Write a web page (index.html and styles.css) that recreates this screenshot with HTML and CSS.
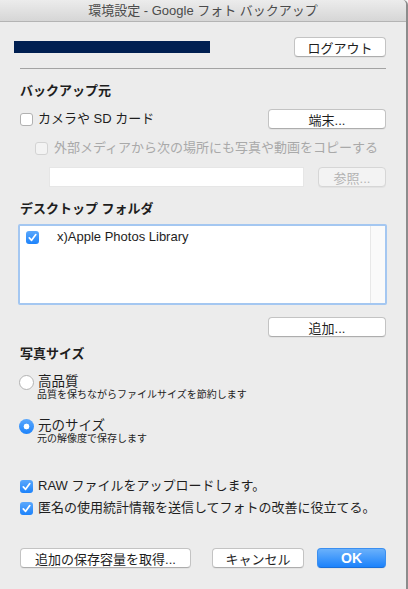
FILE: index.html
```html
<!DOCTYPE html>
<html lang="ja">
<head>
    <meta charset="UTF-8">
    <title>環境設定 - Google フォト バックアップ</title>
    <link rel="stylesheet" href="styles.css">
</head>
<body>
    <div class="window">
        <div class="titlebar">環境設定 - Google フォト バックアップ</div>

        <div class="content">
            <div class="account-row">
                <div class="account-bar"></div>
                <button class="btn btn-logout">ログアウト</button>
            </div>
            <div class="separator"></div>

            <div class="heading heading-source">バックアップ元</div>
            <div class="row row-camera">
                <label class="check-item">
                    <span class="check"></span>
                    <span>カメラや SD カード</span>
                </label>
                <button class="btn btn-wide">端末...</button>
            </div>
            <div class="row row-external">
                <label class="check-item disabled">
                    <span class="check"></span>
                    <span>外部メディアから次の場所にも写真や動画をコピーする</span>
                </label>
            </div>
            <div class="row row-path">
                <div class="path-input"></div>
                <button class="btn btn-browse" disabled>参照...</button>
            </div>

            <div class="heading heading-folder">デスクトップ フォルダ</div>
            <div class="folder-list">
                <div class="folder-rows">
                    <div class="folder-row">
                        <span class="check checked">
                            <svg width="13" height="13" viewBox="0 0 13 13"><path d="M3.3 6.9 L5.6 9.3 L9.8 3.6" fill="none" stroke="#fff" stroke-width="1.7" stroke-linecap="round" stroke-linejoin="round"/></svg>
                        </span>
                        <span class="folder-name">x)Apple Photos Library</span>
                    </div>
                </div>
                <div class="folder-scroll"></div>
            </div>
            <div class="row row-add">
                <button class="btn btn-wide">追加...</button>
            </div>

            <div class="heading heading-size">写真サイズ</div>
            <div class="radio-option option-high">
                <span class="radio"></span>
                <div class="radio-text">
                    <div class="radio-label">高品質</div>
                    <div class="radio-sub">品質を保ちながらファイルサイズを節約します</div>
                </div>
            </div>
            <div class="radio-option option-original">
                <span class="radio selected"></span>
                <div class="radio-text">
                    <div class="radio-label">元のサイズ</div>
                    <div class="radio-sub">元の解像度で保存します</div>
                </div>
            </div>

            <label class="check-item row-raw">
                <span class="check checked">
                    <svg width="13" height="13" viewBox="0 0 13 13"><path d="M3.3 6.9 L5.6 9.3 L9.8 3.6" fill="none" stroke="#fff" stroke-width="1.7" stroke-linecap="round" stroke-linejoin="round"/></svg>
                </span>
                <span>RAW ファイルをアップロードします。</span>
            </label>
            <label class="check-item row-stats">
                <span class="check checked">
                    <svg width="13" height="13" viewBox="0 0 13 13"><path d="M3.3 6.9 L5.6 9.3 L9.8 3.6" fill="none" stroke="#fff" stroke-width="1.7" stroke-linecap="round" stroke-linejoin="round"/></svg>
                </span>
                <span>匿名の使用統計情報を送信してフォトの改善に役立てる。</span>
            </label>

            <div class="footer">
                <button class="btn btn-storage">追加の保存容量を取得...</button>
                <div class="footer-right">
                    <button class="btn btn-cancel">キャンセル</button>
                    <button class="btn btn-ok">OK</button>
                </div>
            </div>
        </div>
    </div>
</body>
</html>
```

FILE: styles.css
```css
*, *::before, *::after {
    box-sizing: border-box;
}

html, body {
    width: 100%;
    height: 100%;
    margin: 0;
}
body {
    background: #f6f6f6;
    font-family: "Liberation Sans", "Noto Sans CJK JP", sans-serif;
    font-size: 13px;
    color: #1e1e1e;
    overflow: hidden;
}
.window {
    width: 408px;
    height: 589px;
    background: #ececec;
    border-right: 2px solid #8c8c8c;
    border-top-right-radius: 5px;
    display: flex;
    flex-direction: column;
}
.titlebar {
    flex: 0 0 22px;
    line-height: 21px;
    text-align: center;
    color: #4b4b4b;
    background: linear-gradient(#ececec, #d6d6d6);
    border-bottom: 1px solid #b4b4b4;
    border-top-right-radius: 5px;
}
.content {
    display: flex;
    flex-direction: column;
    padding: 0 20px;
}

/* buttons */
.btn {
    height: 20px;
    padding: 0;
    font-family: inherit;
    font-size: 13px;
    color: #1e1e1e;
    background: #fff;
    border: 1px solid #c3c3c3;
    border-bottom-color: #adadad;
    border-radius: 4px;
    box-shadow: 0 1px 0 rgba(0, 0, 0, 0.04);
}
.btn:disabled {
    background: #f3f3f3;
    color: #b3b3b3;
    border-color: #d6d6d6;
}
.btn-logout {
    width: 92px;
}
.btn-wide {
    width: 118px;
}
.btn-browse {
    width: 68px;
}
.btn-storage {
    width: 171px;
}
.btn-cancel {
    width: 92px;
}
.btn-ok {
    width: 69px;
    color: #fff;
    font-weight: bold;
    font-size: 14px;
    background: linear-gradient(#6ab1fb, #1c82fb);
    border-color: #3b8ff0;
    border-bottom-color: #1a6fd8;
}

.account-row {
    display: flex;
    align-items: center;
    justify-content: space-between;
    margin-top: 15px;
}
.account-bar {
    width: 196px;
    height: 12px;
    margin-left: -6px;
    background: #001f51;
}
.separator {
    height: 1px;
    margin-top: 11px;
    background: #a3a3a3;
}

.heading {
    font-weight: bold;
    line-height: 16px;
}
.heading-source {
    margin-top: 14px;
}
.heading-folder {
    margin-top: 14px;
}
.heading-size {
    margin-top: 9px;
}

.row {
    display: flex;
    align-items: center;
    justify-content: space-between;
}
.row-camera {
    margin-top: 10px;
}
.row-external {
    margin-top: 11px;
    padding-left: 15px;
}
.row-path {
    margin-top: 11px;
    padding-left: 29px;
}
.row-add {
    justify-content: flex-end;
    margin-top: 12px;
}

/* checkboxes */
.check-item {
    display: flex;
    align-items: center;
    gap: 5px;
    line-height: 16px;
}
.check {
    flex: 0 0 13px;
    width: 13px;
    height: 13px;
    background: #fff;
    border: 1px solid #b1b1b1;
    border-radius: 3px;
    display: flex;
}
.check.checked {
    border: none;
    background: linear-gradient(#5ba8fc, #1d83fb);
}
.check-item.disabled {
    color: #a9a9a9;
    gap: 6px;
}
.check-item.disabled .check {
    background: #f3f3f3;
    border-color: #d3d3d3;
}

.path-input {
    width: 255px;
    height: 20px;
    background: #fff;
    border: 1px solid #e6e6e6;
}

/* folder list */
.folder-list {
    display: flex;
    height: 81px;
    margin: 7px -1px 0 -2px;
    background: #fff;
    border: 2px solid #a4c7f1;
    border-radius: 2px;
}
.folder-rows {
    flex: 1;
    padding: 3px 6px;
}
.folder-row {
    display: flex;
    align-items: center;
    gap: 18px;
    line-height: 16px;
}
.folder-name {
    font-size: 13px;
}
.folder-scroll {
    flex: 0 0 15px;
    background: #fafafa;
    border-left: 1px solid #e8e8e8;
}

/* radios */
.radio-option {
    display: flex;
    align-items: flex-start;
    gap: 4px;
    margin-left: -1px;
}
.option-high {
    margin-top: 12px;
}
.option-original {
    margin-top: 17px;
}
.radio {
    flex: 0 0 15px;
    width: 15px;
    height: 15px;
    margin-top: 1px;
    background: #fff;
    border: 1px solid #b3b3b3;
    border-radius: 50%;
}
.radio.selected {
    border: none;
    background: radial-gradient(circle, #fff 0 2.6px, transparent 3.2px), linear-gradient(#5ba8fc, #1d83fb);
}
.radio-label {
    font-size: 13.5px;
    line-height: 15px;
}
.radio-sub {
    font-size: 10px;
    line-height: 12px;
    margin-left: -1px;
}

.row-raw {
    margin-top: 33px;
}
.row-stats {
    margin-top: 6px;
}

.footer {
    display: flex;
    justify-content: space-between;
    margin-top: 32px;
}
.footer-right {
    display: flex;
    gap: 13px;
}
```
